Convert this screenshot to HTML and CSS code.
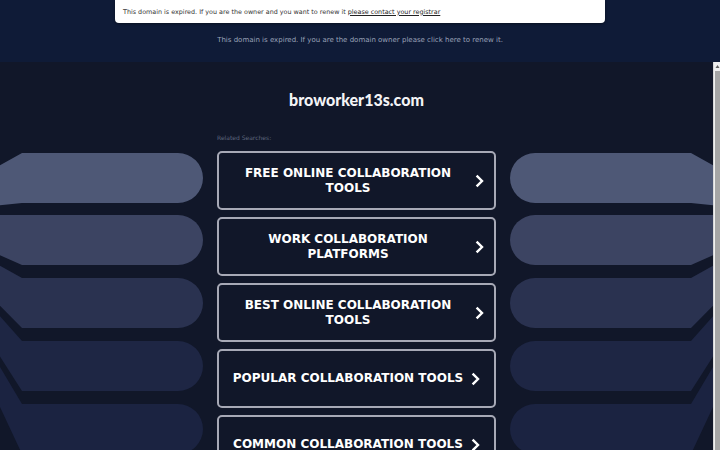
FILE: index.html
```html
<!DOCTYPE html>
<html lang="en">
    <head>
        <meta charset="UTF-8" />
        <meta name="viewport" content="width=device-width, initial-scale=1.0" />
        <title>broworker13s.com</title>
        <link rel="stylesheet" href="styles.css" />
    </head>

    <body>
        <div class="expired">
            <div class="notice">
                This domain is expired. If you are the owner and you want to renew it
                <a href="#">please contact your registrar</a>
            </div>
            <p class="renew">This domain is expired. If you are the domain owner please click here to renew it.</p>
        </div>

        <div class="frame">
            <div class="page">
                <header class="head">
                    <h1 class="domain">broworker13s.com</h1>
                    <p class="related-label">Related Searches:</p>
                </header>

                <!-- side ribbons, tails run to a vanishing point off the outer edge -->
                <svg class="deco deco-left" viewBox="0 0 203 323">
                    <path fill="#4e5876" d="M-90,64 L22,2 L178,2 A25,25 0 0 1 178,52 L22,52 Z" />
                    <path fill="#3c4462" d="M-90,64 L22,64 L178,64 A25,25 0 0 1 178,114 L22,114 Z" />
                    <path fill="#2a3250" d="M-90,64 L22,127 L178,127 A25,25 0 0 1 178,177 L22,177 Z" />
                    <path fill="#1e2644" d="M-90,64 L22,190 L178,190 A25,25 0 0 1 178,240 L22,240 Z" />
                    <path fill="#1b2341" d="M-90,64 L22,253 L178,253 A25,25 0 0 1 178,303 L22,303 Z" />
                </svg>

                <ul class="links">
                    <li><a href="#" class="link"><span>Free Online Collaboration Tools</span><svg class="chev" viewBox="0 0 9 14"><polyline points="1.6,1.6 7,7 1.6,12.4" /></svg></a></li>
                    <li><a href="#" class="link"><span>Work Collaboration Platforms</span><svg class="chev" viewBox="0 0 9 14"><polyline points="1.6,1.6 7,7 1.6,12.4" /></svg></a></li>
                    <li><a href="#" class="link"><span>Best Online Collaboration Tools</span><svg class="chev" viewBox="0 0 9 14"><polyline points="1.6,1.6 7,7 1.6,12.4" /></svg></a></li>
                    <li><a href="#" class="link"><span>Popular Collaboration Tools</span><svg class="chev" viewBox="0 0 9 14"><polyline points="1.6,1.6 7,7 1.6,12.4" /></svg></a></li>
                    <li><a href="#" class="link"><span>Common Collaboration Tools</span><svg class="chev" viewBox="0 0 9 14"><polyline points="1.6,1.6 7,7 1.6,12.4" /></svg></a></li>
                </ul>

                <svg class="deco deco-right" viewBox="0 0 203 323">
                    <path fill="#4e5876" d="M-90,64 L22,2 L178,2 A25,25 0 0 1 178,52 L22,52 Z" />
                    <path fill="#3c4462" d="M-90,64 L22,64 L178,64 A25,25 0 0 1 178,114 L22,114 Z" />
                    <path fill="#2a3250" d="M-90,64 L22,127 L178,127 A25,25 0 0 1 178,177 L22,177 Z" />
                    <path fill="#1e2644" d="M-90,64 L22,190 L178,190 A25,25 0 0 1 178,240 L22,240 Z" />
                    <path fill="#1b2341" d="M-90,64 L22,253 L178,253 A25,25 0 0 1 178,303 L22,303 Z" />
                </svg>
            </div>

            <!-- frame's own scroll rail -->
            <div class="rail">
                <svg class="rail-up" viewBox="0 0 7 9"><polygon points="1.5,6 3.5,3 5.5,6" /></svg>
                <div class="rail-thumb"></div>
            </div>
        </div>
    </body>
</html>
```

FILE: styles.css
```css
html, body {
    margin: 0;
    height: 100%;
    overflow: hidden;
}

body {
    background-color: #111729;
    font-family: "DejaVu Sans", sans-serif;
}

/* expired banner strip */
.expired {
    height: 62px;
    background-color: #0f1b37;
    display: flex;
    flex-direction: column;
    align-items: center;
}

.notice {
    width: 490px;
    height: 23px;
    box-sizing: border-box;
    padding: 0 8px;
    display: flex;
    align-items: center;
    gap: 2px;
    background-color: #ffffff;
    border-radius: 0 0 4px 4px;
    box-shadow: 0 1px 3px rgba(0, 0, 0, .4);
    font-size: 6.4px;
    color: #333333;
}

.notice a {
    color: #222222;
    text-decoration: underline;
}

.renew {
    margin: 12px 0 0 0;
    font-size: 7px;
    line-height: 10px;
    color: #9aa2b8;
}

/* the parked page frame */
.frame {
    height: 560px;
    display: flex;
    background-color: #111729;
}

.page {
    flex: 1;
    display: grid;
    grid-template-columns: 203px 279px 203px;
    column-gap: 14px;
    align-content: start;
    padding: 28px 0 0 0;
}

.rail {
    flex: 0 0 7px;
    display: flex;
    flex-direction: column;
    background-color: #efefef;
    border-left: 1px solid #d8d8d8;
}

.rail-up {
    width: 7px;
    height: 9px;
}

.rail-up polygon {
    fill: #606060;
}

.rail-thumb {
    flex: 1;
    margin: 0 1px 0 1px;
    background-color: #a5a5a5;
}

.head {
    grid-column: 2;
    grid-row: 1;
    display: flex;
    flex-direction: column;
}

.domain {
    margin: 0;
    text-align: center;
    font-family: Lato, sans-serif;
    font-weight: 900;
    font-size: 16px;
    line-height: 20px;
    color: #f4f4f6;
}

.related-label {
    margin: 24px 0 9px 0;
    font-size: 6px;
    line-height: 8px;
    color: #5d667c;
}

.deco {
    grid-row: 2;
    width: 203px;
    height: 323px;
}

.deco-left {
    grid-column: 1;
}

.deco-right {
    grid-column: 3;
    transform: scaleX(-1);
}

.links {
    grid-column: 2;
    grid-row: 2;
    list-style: none;
    margin: 0;
    padding: 0;
    display: flex;
    flex-direction: column;
    gap: 7px;
}

.link {
    height: 59px;
    box-sizing: border-box;
    padding: 0 10px;
    display: flex;
    align-items: center;
    justify-content: center;
    gap: 8px;
    border: 2px solid #a7a9b6;
    border-radius: 5px;
    background-color: #111729;
    color: #ffffff;
    text-decoration: none;
    text-transform: uppercase;
    font-weight: bold;
    font-size: 12px;
    line-height: 15px;
    text-align: center;
}

.chev {
    flex: 0 0 9px;
    height: 14px;
}

.chev polyline {
    fill: none;
    stroke: #ffffff;
    stroke-width: 2.4;
}
```
